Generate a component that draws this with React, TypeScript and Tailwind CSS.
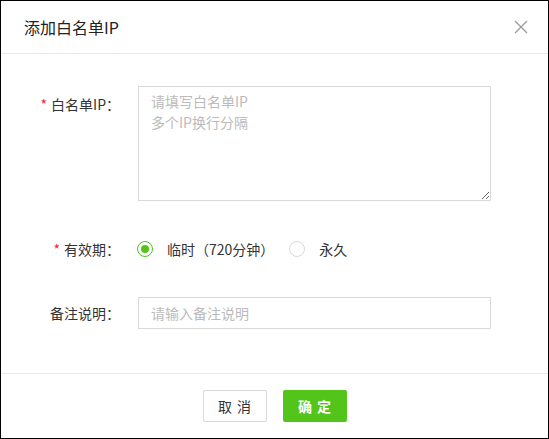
import { useState } from "react";

const font = {
  fontFamily: '"Noto Sans CJK SC", "Noto Sans", sans-serif',
};

// radio item ---------------------------------------------------------------
function Radio({ checked, label, onClick }: { checked: boolean; label: string; onClick: () => void }) {
  return (
    <label className="flex items-center cursor-pointer" onClick={onClick}>
      <span
        className={
          checked
            ? "w-4 h-4 rounded-full border border-[#52c41a] flex items-center justify-center"
            : "w-4 h-4 rounded-full border border-[#d9d9d9] flex items-center justify-center"
        }
      >
        {checked ? <span className="w-2 h-2 rounded-full bg-[#52c41a]" /> : null}
      </span>
      <span className="ml-[14px] text-[14px] text-[#333]">{label}</span>
    </label>
  );
}

export default function App() {
  const [forever, setForever] = useState(false);
  return (
    <div
      className="w-[549px] h-[439px] border border-black bg-white flex flex-col"
      style={font}
    >
      {/* header */}
      <div className="h-[53px] border-b border-[#e8e8e8] flex items-center justify-between pl-[23px] pr-[20px]">
        <div className="text-[16px] text-[#222] leading-none pb-[1px]">添加白名单IP</div>
        <svg width="14" height="14" viewBox="0 0 14 14" className="mb-[1px]">
          <path d="M1 1 L13 13 M13 1 L1 13" stroke="#999" strokeWidth="1.3" fill="none" />
        </svg>
      </div>

      {/* body */}
      <div className="flex-1 pt-[32px] text-[14px] text-[#333]">
        <div className="flex">
          <div className="w-[119px] flex justify-end pt-[8px] leading-[21px]">
            <span className="text-[#f5222d] mr-[4px]">*</span>
            <span>白名单IP：</span>
          </div>
          <textarea
            className="ml-[18px] w-[353px] h-[115px] border border-[#d9d9d9] px-[12px] py-[4px] text-[14px] leading-[21px] placeholder:text-[#bbb] outline-none"
            style={font}
            placeholder={"请填写白名单IP\n多个IP换行分隔"}
          />
        </div>

        <div className="flex items-center h-[32px] mt-[32px]">
          <div className="w-[119px] flex justify-end">
            <span className="text-[#f5222d] mr-[4px]">*</span>
            <span>有效期：</span>
          </div>
          <div className="ml-[17px] flex items-center gap-[15px]">
            <Radio checked={!forever} label="临时（720分钟）" onClick={() => setForever(false)} />
            <Radio checked={forever} label="永久" onClick={() => setForever(true)} />
          </div>
        </div>

        <div className="flex items-center mt-[32px]">
          <div className="w-[119px] flex justify-end">备注说明：</div>
          <input
            className="ml-[18px] w-[353px] h-[32px] border border-[#d9d9d9] px-[12px] text-[14px] placeholder:text-[#bbb] outline-none"
            style={font}
            placeholder="请输入备注说明"
          />
        </div>
      </div>

      {/* footer */}
      <div className="border-t border-[#e8e8e8] py-[16px] flex justify-center gap-[16px]">
        <button className="w-[64px] h-[32px] border border-[#d9d9d9] rounded-[2px] bg-white text-[14px] text-[#333] flex items-center justify-center gap-[5px]">
          <span>取</span>
          <span>消</span>
        </button>
        <button className="w-[64px] h-[32px] rounded-[2px] bg-[#52c41a] text-[14px] text-white font-bold flex items-center justify-center gap-[5px]">
          <span>确</span>
          <span>定</span>
        </button>
      </div>
    </div>
  );
}
